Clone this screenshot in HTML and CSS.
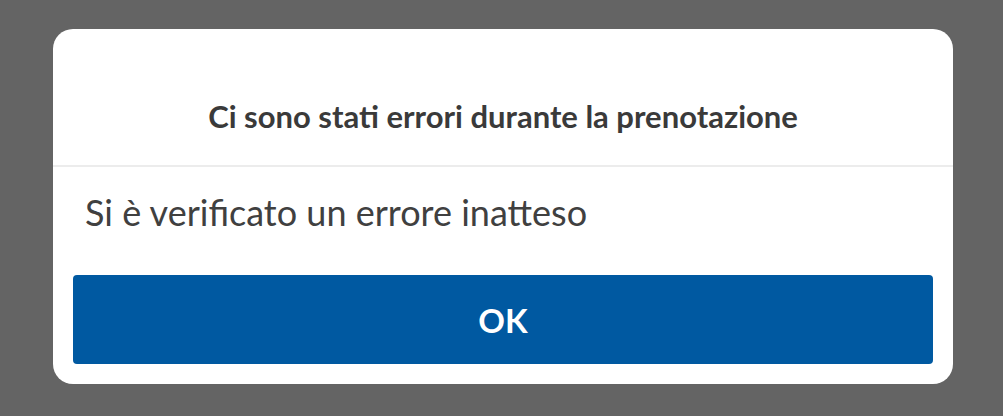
FILE: index.html
```html
<!DOCTYPE html>
<html lang="it">
<head>
<meta charset="utf-8">
<link rel="stylesheet" href="styles.css">
</head>
<body>
<div class="dialog">
  <div class="header"><h1 class="title">Ci sono sta&zwnj;ti errori durante la prenotazione</h1></div>
  <div class="content">
    <p class="message">Si è verificato un errore inatteso</p>
    <button class="ok">OK</button>
  </div>
</div>
</body>
</html>
```
FILE: styles.css
```css
html, body {
  margin: 0;
  padding: 0;
  background: #646464;
  height: 416px;
  overflow: hidden;
}
body {
  font-family: Lato, "Open Sans", sans-serif;
  color: #404040;
  padding-top: 29px;
  padding-left: 53px;
  box-sizing: border-box;
}
.dialog {
  width: 900px;
  background: #fff;
  border-radius: 20px;
  display: flex;
  flex-direction: column;
}
.header {
  height: 136px;
  border-bottom: 2px solid #ececec;
  display: flex;
  align-items: flex-end;
  justify-content: center;
}
.title {
  margin: 0 0 31px;
  font-size: 31px;
  font-weight: 700;
  line-height: 36px;
  color: #3a3a3a;
}
.content {
  padding: 0 20px 20px;
  display: flex;
  flex-direction: column;
}
.message {
  margin: 23px 0 0 12px;
  font-size: 36px;
  line-height: 44px;
  color: #404040;
}
.ok {
  margin-top: 41px;
  height: 89px;
  padding: 0;
  border: none;
  border-radius: 4px;
  background: #0059a1;
  color: #fff;
  font-family: Lato, sans-serif;
  font-weight: 700;
  font-size: 33px;
}
```
